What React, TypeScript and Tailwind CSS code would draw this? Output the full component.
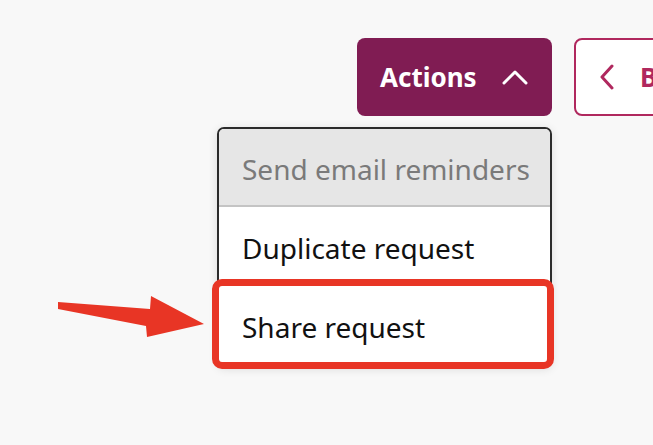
import React from "react";

export default function App() {
  return (
    <div
      className="relative w-[653px] h-[445px] overflow-hidden bg-[#f8f8f8]"
      style={{ fontFamily: '"Noto Sans", "Open Sans", sans-serif' }}
    >
      <div className="flex items-start gap-[22px] pl-[357px] pt-[38px]">
        <button className="flex h-[78px] w-[195px] shrink-0 items-center rounded-[8px] bg-[#801c53] pl-[23px] text-[26px] font-bold text-white">
          <span>Actions</span>
          <svg className="ml-[25px]" width="26" height="18" viewBox="0 0 26 18" fill="none">
            <path d="M2 15 L13 4 L24 15" stroke="white" strokeWidth="3" strokeLinecap="round" strokeLinejoin="round" />
          </svg>
        </button>
        <button className="flex h-[78px] w-[160px] shrink-0 items-center rounded-[8px] border-2 border-[#b0285e] bg-white pl-[22px] text-[26px] font-bold text-[#b0285e]">
          <svg width="18" height="26" viewBox="0 0 18 26" fill="none">
            <path d="M14 2 L4 13 L14 24" stroke="#b0285e" strokeWidth="3" strokeLinecap="round" strokeLinejoin="round" />
          </svg>
          <span className="ml-[24px]">Back</span>
        </button>
      </div>

      <div className="absolute left-[217px] top-[127px] w-[335px] overflow-hidden rounded-[7px] border-2 border-[#2b2b2b] bg-white shadow-[0_2px_10px_rgba(0,0,0,0.12)]">
        <div className="flex h-[78px] items-center border-b-2 border-[#c4c4c4] bg-[#e6e6e6] pl-[23px] pt-[4px] text-[28px] text-[#7a7a7a]">
          Send email reminders
        </div>
        <div className="flex h-[79px] items-center pl-[23px] pt-[2px] text-[28px] text-[#111]">
          Duplicate request
        </div>
        <div className="flex h-[79px] items-center pl-[23px] pt-[2px] text-[28px] text-[#111]">
          Share request
        </div>
      </div>

      <div className="absolute left-[212px] top-[279px] h-[90px] w-[342px] rounded-[10px] border-[7px] border-[#e83525]" />

      <svg className="absolute left-0 top-0" width="653" height="445" viewBox="0 0 653 445">
        <polygon
          points="58,302 150,309 151,296 204,324 147,337 146,326 58,309"
          fill="#e83525"
        />
      </svg>
    </div>
  );
}
